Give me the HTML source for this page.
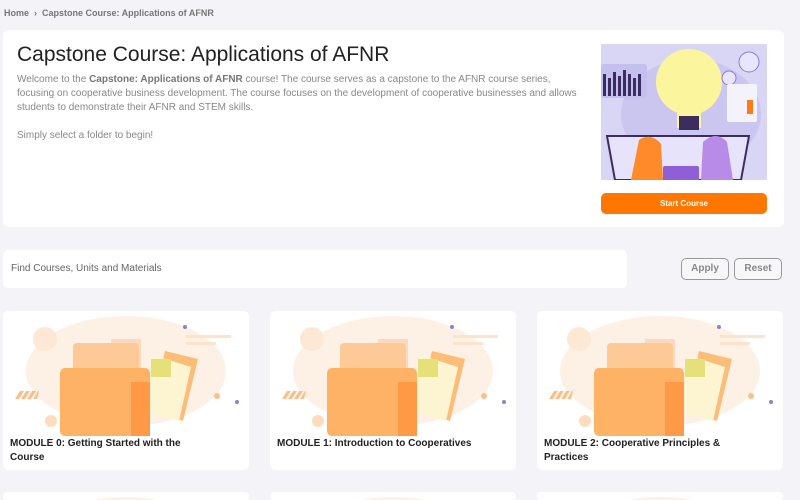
<!DOCTYPE html>
<html style="width:800px;height:500px;overflow:hidden"><head><style>
*{box-sizing:border-box;margin:0;padding:0}
body{width:800px;height:500px;overflow:hidden;background:#f3f3f8;font-family:"Liberation Sans",sans-serif;position:relative}
.bc{position:absolute;left:4px;top:8px;font-size:9px;color:#777;font-weight:bold}
.hero{position:absolute;left:3px;top:30px;width:781px;height:197px;background:#fff;border-radius:6px}
h1{position:absolute;left:14px;top:13px;font-size:21px;font-weight:normal;color:#222}
.desc{position:absolute;left:14px;top:43px;width:565px;font-size:10px;line-height:14px;color:#888}
.desc b{color:#777}
.img{position:absolute;left:598px;top:14px;width:166px;height:136px;background:#d9d6f5;overflow:hidden}
.btn{position:absolute;left:598px;top:163px;width:166px;height:21px;background:#ff7700;border-radius:5px;color:#fff;font-size:8px;font-weight:bold;text-align:center;line-height:21px}
.search{position:absolute;left:3px;top:250px;width:624px;height:38px;background:#fff;border-radius:5px;font-size:10px;color:#666;padding:13px 8px}
.sb{position:absolute;top:258px;height:22px;border:1px solid #999;border-radius:5px;font-size:10px;font-weight:bold;color:#888;text-align:center;line-height:20px;background:#f7f7fa}
.card{position:absolute;width:246px;height:159px;background:#fff;border-radius:5px;overflow:hidden}
.card svg{position:absolute;left:0;top:0}
.card p{position:absolute;left:7px;top:126px;width:200px;font-size:10px;font-weight:bold;color:#222;line-height:14px}
</style></head><body>
<div class="bc">Home &nbsp;›&nbsp; Capstone Course: Applications of AFNR</div>
<div class="hero">
<h1>Capstone Course: Applications of AFNR</h1>
<div class="desc">Welcome to the <b>Capstone: Applications of AFNR</b> course! The course serves as a capstone to the AFNR course series, focusing on cooperative business development. The course focuses on the development of cooperative businesses and allows students to demonstrate their AFNR and STEM skills.<br><br>Simply select a folder to begin!</div>
<div class="img"><svg width="166" height="136">
<ellipse cx="90" cy="70" rx="70" ry="55" fill="#cbc6f0"/>
<rect x="0" y="20" width="46" height="34" rx="3" fill="#c3bfee"/>
<g fill="#3d2c5e"><rect x="2" y="30" width="3" height="22"/><rect x="7" y="34" width="3" height="18"/><rect x="12" y="28" width="3" height="24"/><rect x="17" y="32" width="3" height="20"/><rect x="22" y="26" width="3" height="26"/><rect x="27" y="30" width="3" height="22"/><rect x="32" y="34" width="3" height="18"/><rect x="37" y="30" width="3" height="22"/></g>
<circle cx="88" cy="38" r="33" fill="#fbf69e"/><rect x="76" y="62" width="24" height="22" fill="#fbf69e"/>
<rect x="78" y="72" width="20" height="14" fill="#3d2c5e"/>
<circle cx="148" cy="18" r="10" fill="#e9e4ff" stroke="#8a7bd6"/><circle cx="128" cy="34" r="7" fill="#e9e4ff" stroke="#8a7bd6"/>
<rect x="126" y="40" width="30" height="38" rx="2" fill="#f4f2fb"/><rect x="146" y="56" width="6" height="14" fill="#ff7a1a"/>
<polygon points="6,92 148,92 140,136 14,136" fill="#e6e3fb" stroke="#3d2c5e" stroke-width="2"/>
<path d="M30 136 L38 96 Q50 88 60 100 L62 136Z" fill="#ff8a2a"/>
<path d="M100 136 L102 98 Q115 86 126 98 L132 136Z" fill="#b98be8"/>
<rect x="62" y="122" width="36" height="16" rx="2" fill="#8e5fd6"/>
</svg></div>
<div class="btn">Start Course</div>
</div>
<div class="search">Find Courses, Units and Materials</div>
<div class="sb" style="left:681px;width:48px">Apply</div>
<div class="sb" style="left:734px;width:48px">Reset</div>

<svg width="0" height="0" style="position:absolute;left:0;top:0"><defs><g id="f">
<ellipse cx="123" cy="60" rx="100" ry="55" fill="#fdf1e6"/>
<circle cx="42" cy="28" r="12" fill="#fde8d6"/><circle cx="48" cy="110" r="6" fill="#fcdcbc"/>
<g fill="#fbc08a"><polygon points="12,88 17,80 21,80 16,88"/><polygon points="18,88 23,80 27,80 22,88"/><polygon points="24,88 29,80 33,80 28,88"/><polygon points="30,88 35,80 36,80 34,88"/></g>
<rect x="183" y="24" width="45" height="3" fill="#fbe3cc"/><rect x="183" y="31" width="30" height="3" fill="#fbe3cc"/>
<circle cx="182" cy="16" r="2" fill="#8a83c8"/><circle cx="234" cy="91" r="2" fill="#8a83c8"/><circle cx="214" cy="85" r="3" fill="#fbc08a"/>
<rect x="108" y="28" width="30" height="60" fill="#fbd8c2"/>
<rect x="70" y="32" width="66" height="80" rx="4" fill="#fdc996"/>
<polygon points="162,40 195,48 180,110 148,100" fill="#fbbd77"/>
<polygon points="150,44 188,56 176,110 140,100" fill="#fdf5d2"/>
<rect x="148" y="48" width="20" height="18" fill="#e5e07a"/>
<rect x="57" y="57" width="90" height="68" rx="5" fill="#fdb266"/>
<rect x="128" y="71" width="19" height="54" fill="#fe9a45"/>
</g></defs></svg>
<div class="card" style="left:3px;top:311px"><svg width="246" height="126"><use href="#f"/></svg><p>MODULE 0: Getting Started with the Course</p></div>
<div class="card" style="left:270px;top:311px"><svg width="246" height="126"><use href="#f"/></svg><p>MODULE 1: Introduction to Cooperatives</p></div>
<div class="card" style="left:537px;top:311px"><svg width="246" height="126"><use href="#f"/></svg><p>MODULE 2: Cooperative Principles &amp; Practices</p></div>
<div class="card" style="left:3px;top:492px;height:8px"><svg width="246" height="8"><use href="#f"/></svg></div>
<div class="card" style="left:270px;top:492px;height:8px"><svg width="246" height="8"><use href="#f"/></svg></div>
<div class="card" style="left:537px;top:492px;height:8px"><svg width="246" height="8"><use href="#f"/></svg></div>
</body></html>
